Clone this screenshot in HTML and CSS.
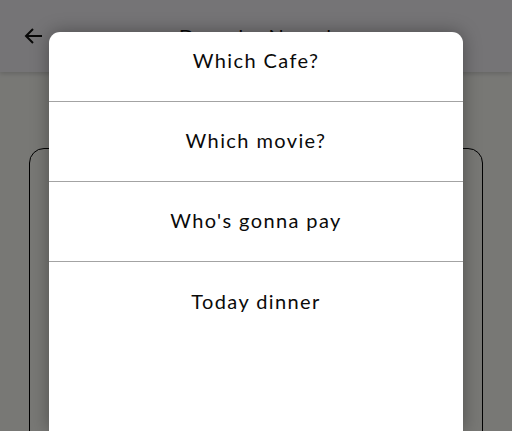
FILE: index.html
```html
<!DOCTYPE html>
<html>
<head>
<meta charset="utf-8">
<link rel="stylesheet" href="styles.css">
</head>
<body>
<div class="app">
  <header class="topbar">
    <svg class="back" width="24" height="24" viewBox="0 0 24 24"><path d="M20 12H4M11 5l-7 7 7 7" fill="none" stroke="#111" stroke-width="2"/></svg>
    <div class="title">Draw by Name!</div>
  </header>
  <main class="content">
    <div class="card"></div>
  </main>
  <div class="scrim"></div>
  <div class="sheet">
    <div class="item first">Which Cafe?</div>
    <div class="item">Which movie?</div>
    <div class="item">Who's gonna pay</div>
    <div class="item last">Today dinner</div>
  </div>
</div>
</body>
</html>
```
FILE: styles.css
```css
* { box-sizing: border-box; }
html, body { margin: 0; padding: 0; }
body {
  width: 512px;
  height: 431px;
  overflow: hidden;
  font-family: "Lato", "Noto Sans", sans-serif;
  background: #fafaf5;
}
.app {
  position: relative;
  width: 512px;
  height: 431px;
  overflow: hidden;
  display: flex;
  flex-direction: column;
}
.topbar {
  flex-shrink: 0;
  height: 72px;
  background: #f5f3f6;
  display: flex;
  align-items: center;
  padding-left: 22px;
  box-shadow: 0 2px 4px rgba(0,0,0,0.15);
  position: relative;
  z-index: 1;
}
.title {
  flex: 1;
  text-align: center;
  margin-right: 46px;
  font-size: 20px;
  letter-spacing: 1.4px;
  color: #111;
}
.content {
  flex: 1;
  min-height: 0;
  overflow: hidden;
  padding: 76px 29px 0 29px;
}
.card {
  height: 320px;
  border: 1px solid #000;
  border-radius: 15px;
}
.scrim {
  position: absolute;
  inset: 0;
  background: rgba(0,0,0,0.52);
  z-index: 2;
}
.sheet {
  position: absolute;
  left: 49px;
  top: 32px;
  width: 414px;
  bottom: 0;
  background: #fff;
  border-radius: 11px 11px 0 0;
  box-shadow: 0 0 18px rgba(0,0,0,0.35);
  z-index: 3;
  display: flex;
  flex-direction: column;
}
.item {
  height: 80px;
  flex-shrink: 0;
  display: flex;
  align-items: center;
  justify-content: center;
  font-size: 20px;
  letter-spacing: 1.4px;
  color: #0a0a0a;
  border-bottom: 1px solid #a3a3a3;
  padding-bottom: 3px;
}
.item.first { height: 70px; padding-bottom: 13px; }
.item.last { border-bottom: none; }
```
